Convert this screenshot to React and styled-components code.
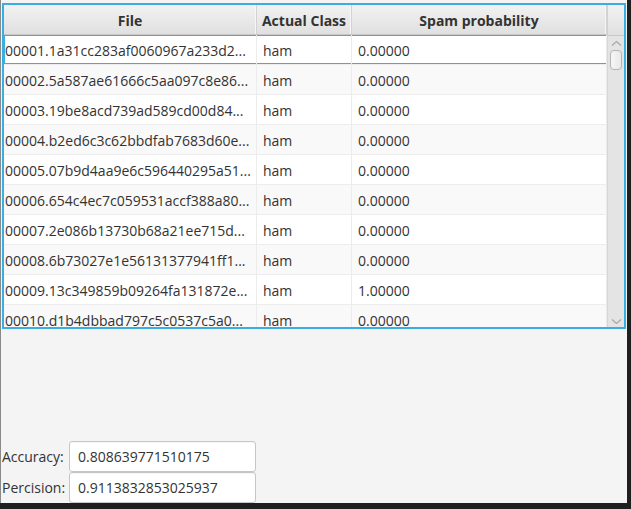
import React from 'react';
import styled, { createGlobalStyle } from 'styled-components';

const GlobalStyle = createGlobalStyle`
  html, body {
    margin: 0;
    padding: 0;
    background: #1f1f1f;
  }
  * {
    box-sizing: border-box;
  }
`;

const rows = [
  ['00001.1a31cc283af0060967a233d2...', 'ham', '0.00000'],
  ['00002.5a587ae61666c5aa097c8e86...', 'ham', '0.00000'],
  ['00003.19be8acd739ad589cd00d84...', 'ham', '0.00000'],
  ['00004.b2ed6c3c62bbdfab7683d60e...', 'ham', '0.00000'],
  ['00005.07b9d4aa9e6c596440295a51...', 'ham', '0.00000'],
  ['00006.654c4ec7c059531accf388a80...', 'ham', '0.00000'],
  ['00007.2e086b13730b68a21ee715d...', 'ham', '0.00000'],
  ['00008.6b73027e1e56131377941ff1...', 'ham', '0.00000'],
  ['00009.13c349859b09264fa131872e...', 'ham', '1.00000'],
  ['00010.d1b4dbbad797c5c0537c5a0...', 'ham', '0.00000'],
];

const COLS = '253px 95px 255px';

const Screen = styled.div`
  width: 631px;
  height: 509px;
  background: #1f1f1f;
  padding: 0 4px 6px 0;
`;

const Window = styled.div`
  width: 627px;
  height: 503px;
  background: #f4f4f4;
  border-left: 1px solid #8a8a8a;
  display: flex;
  flex-direction: column;
  font-family: 'Open Sans', 'Noto Sans', sans-serif;
  font-size: 14px;
  color: #333;
`;

const Table = styled.div`
  margin: 3px 1px 0 1px;
  height: 326px;
  border: 1px solid #3aaee0;
  padding: 1px;
  background: #3aaee0;
  display: flex;
  overflow: hidden;
`;

const TableBody = styled.div`
  flex: 1;
  display: flex;
  flex-direction: column;
  background: #fff;
  overflow: hidden;
`;

const HeaderRow = styled.div`
  display: grid;
  grid-template-columns: ${COLS};
  height: 30px;
  flex-shrink: 0;
  background: linear-gradient(#f2f2f2, #e0e0e0);
  border-bottom: 1px solid #c8c8c8;
`;

const HeaderCell = styled.div`
  display: flex;
  align-items: center;
  justify-content: center;
  padding-top: 1px;
  font-weight: 700;
  color: #333;
  border-right: 1px solid #d2d2d2;
  box-shadow: inset -1px 0 0 #f6f6f6;
`;

const Row = styled.div`
  display: grid;
  grid-template-columns: ${COLS};
  height: 30px;
  flex-shrink: 0;
  background: ${({ odd }) => (odd ? '#f9f9f9' : '#fff')};
  border-bottom: 1px solid #ededed;
  box-shadow: ${({ focused }) => (focused ? 'inset 0 0 0 1px #3aaee0' : 'none')};
`;

const Cell = styled.div`
  display: flex;
  align-items: center;
  padding: 2px 4px 0 2px;
  border-right: 1px solid #ececec;
  white-space: nowrap;
  overflow: hidden;
  &:first-child {
    padding-left: 1px;
  }
  &:nth-child(2),
  &:nth-child(3) {
    padding-left: 6px;
  }
`;

const ScrollColumn = styled.div`
  width: 17px;
  display: flex;
  flex-direction: column;
  background: #fff;
`;

const ScrollCorner = styled.div`
  height: 31px;
  background: linear-gradient(#f2f2f2, #e0e0e0);
  border-bottom: 1px solid #c8c8c8;
  border-left: 1px solid #d2d2d2;
`;

const Track = styled.div`
  flex: 1;
  background: #e4e4e4;
  border-left: 1px solid #d6d6d6;
  display: flex;
  flex-direction: column;
  align-items: center;
  padding: 4px 0 2px;
`;

const Thumb = styled.div`
  width: 12px;
  height: 20px;
  margin-top: 3px;
  border: 1px solid #b4b4b4;
  border-radius: 4px;
  background: linear-gradient(90deg, #f6f6f6, #e9e9e9);
`;

const Spacer = styled.div`
  flex: 1;
`;

const Form = styled.div`
  display: grid;
  grid-template-columns: 68px 187px;
  grid-auto-rows: 31px;
  align-items: center;
`;

const Label = styled.span`
  color: #333;
  padding-left: 1px;
`;

const Field = styled.div`
  height: 31px;
  background: #fff;
  border: 1px solid #c6c6c6;
  border-radius: 3px;
  box-shadow: inset 0 1px 1px rgba(0, 0, 0, 0.04);
  display: flex;
  align-items: center;
  padding-left: 8px;
  color: #333;
`;

const Chevron = ({ down }) => (
  <svg width="11" height="7" viewBox="0 0 11 7">
    <path
      d={down ? 'M1 1.5 L5.5 5.5 L10 1.5' : 'M1 5.5 L5.5 1.5 L10 5.5'}
      fill="none"
      stroke="#a8a8a8"
      strokeWidth="1.3"
    />
  </svg>
);

export default function App() {
  return (
    <Screen>
      <GlobalStyle />
      <Window>
        <Table>
          <TableBody>
            <HeaderRow>
              <HeaderCell>File</HeaderCell>
              <HeaderCell>Actual Class</HeaderCell>
              <HeaderCell>Spam probability</HeaderCell>
            </HeaderRow>
            {rows.map((r, i) => (
              <Row key={r[0]} odd={i % 2 === 1} focused={i === 0}>
                <Cell>{r[0]}</Cell>
                <Cell>{r[1]}</Cell>
                <Cell>{r[2]}</Cell>
              </Row>
            ))}
          </TableBody>
          <ScrollColumn>
            <ScrollCorner />
            <Track>
              <Chevron />
              <Thumb />
              <Spacer />
              <Chevron down />
            </Track>
          </ScrollColumn>
        </Table>
        <Spacer />
        <Form>
          <Label>Accuracy:</Label>
          <Field>0.808639771510175</Field>
          <Label>Percision:</Label>
          <Field>0.9113832853025937</Field>
        </Form>
      </Window>
    </Screen>
  );
}
